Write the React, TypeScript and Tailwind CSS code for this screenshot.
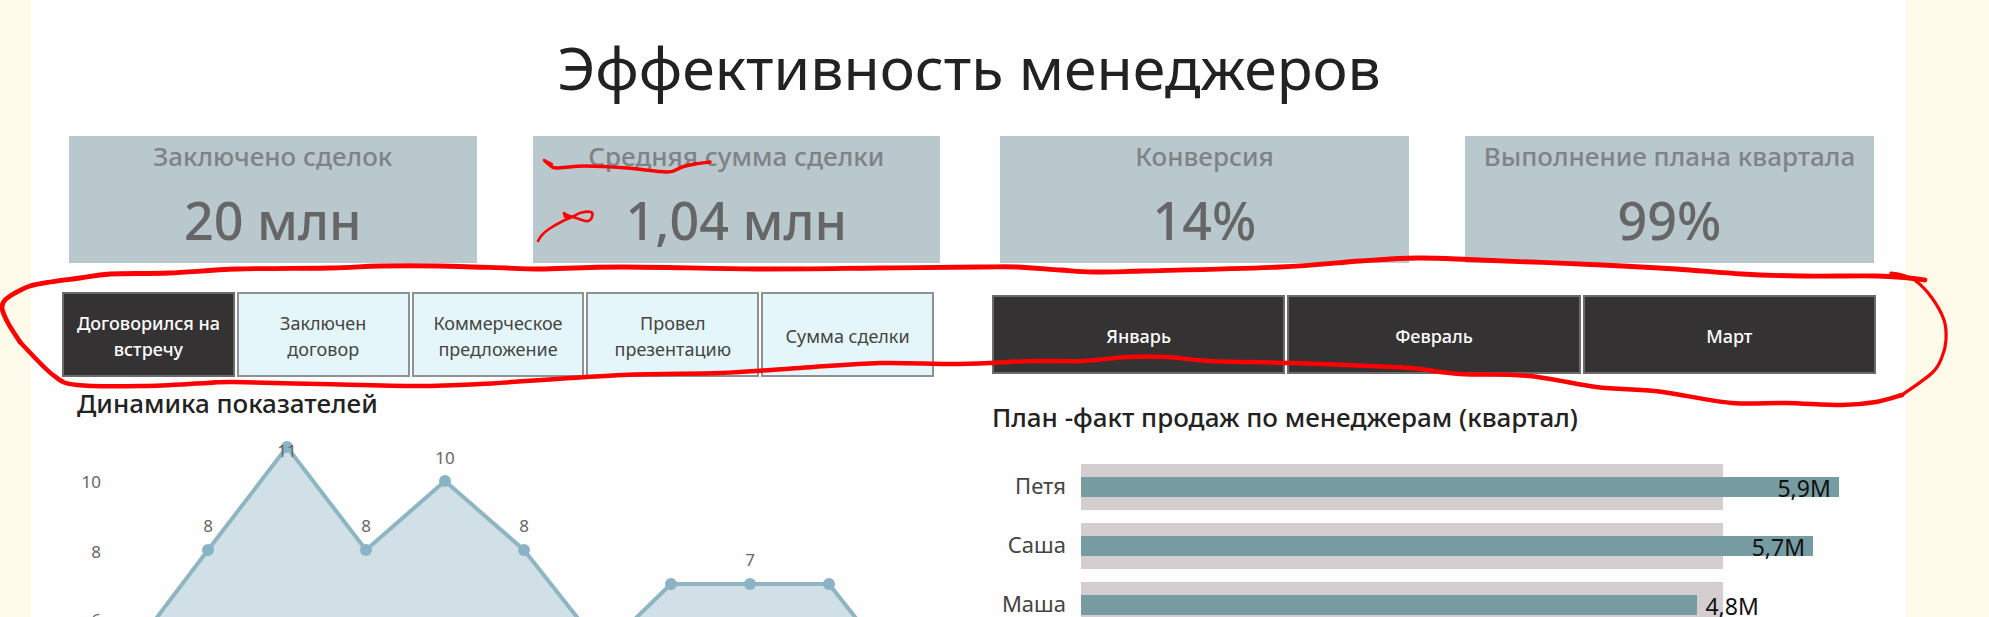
const kpiGroups = [
  [
    { label: "Заключено сделок", value: "20 млн" },
    { label: "Средняя сумма сделки", value: "1,04 млн" },
  ],
  [
    { label: "Конверсия", value: "14%" },
    { label: "Выполнение плана квартала", value: "99%" },
  ],
];

const stages = ["Договорился на встречу", "Заключен договор", "Коммерческое предложение", "Провел презентацию", "Сумма сделки"];
const months = ["Январь", "Февраль", "Март"];

const PLAN = 5;
const AXIS_MAX = 6.19;
const managers = [
  { name: "Петя", value: 5.9, inside: true },
  { name: "Саша", value: 5.7, inside: true },
  { name: "Маша", value: 4.8, inside: false },
];

type Point = [number, number];

/* Smooth curve through a list of points (Catmull-Rom turned into Béziers). */
function smooth(points: Point[]): string {
  const at = (i: number) => points[Math.max(0, Math.min(points.length - 1, i))];
  let d = `M${points[0][0]} ${points[0][1]}`;
  for (let i = 0; i < points.length - 1; i++) {
    const [a, b, c, e] = [at(i - 1), at(i), at(i + 1), at(i + 2)];
    d += ` C${b[0] + (c[0] - a[0]) / 6} ${b[1] + (c[1] - a[1]) / 6} ${c[0] - (e[0] - b[0]) / 6} ${c[1] - (e[1] - b[1]) / 6} ${c[0]} ${c[1]}`;
  }
  return d;
}

const loopTop: Point[] = [
  [20, 342], [8, 323], [2, 308], [5, 300], [15, 293], [30, 286], [50, 282], [80, 278], [110, 274], [169, 273], [237, 269], [330, 268],
  [381, 266], [440, 266], [507, 268], [540, 269], [623, 267], [757, 269], [880, 268], [980, 267], [1017, 267],
  [1060, 270], [1093, 272], [1143, 271], [1280, 267], [1360, 261], [1417, 258], [1480, 260], [1602, 265],
  [1676, 269], [1742, 274], [1802, 276], [1876, 276], [1909, 278], [1925, 280],
];
const loopEnd: Point[] = [
  [1891, 273], [1902, 275], [1916, 281], [1932, 298], [1944, 320], [1946, 340], [1942, 357], [1932, 373], [1902, 395],
];
const loopBottom: Point[] = [
  [1902, 395], [1876, 402], [1842, 405], [1786, 403], [1732, 403], [1669, 393], [1642, 390], [1596, 387],
  [1529, 376], [1460, 374], [1420, 369], [1393, 367], [1293, 363], [1210, 361], [1167, 357], [1127, 357],
  [1083, 361], [1033, 361], [960, 364], [880, 363], [800, 368], [720, 373], [623, 375], [480, 384],
  [417, 386], [320, 384], [233, 382], [207, 383], [143, 386], [77, 385], [53, 375], [20, 342],
];
const underline: Point[] = [
  [545, 161], [551, 166], [557, 168], [585, 166], [627, 168], [667, 172], [682, 167], [695, 164], [710, 162],
];
const scribble: Point[] = [
  [538, 241], [542, 235], [549, 229], [561, 222], [572, 217], [580, 213], [591, 212], [592, 217], [588, 221], [582, 220], [573, 217], [564, 214],
];

function Annotations() {
  return (
    <svg viewBox="0 0 1989 617" className="pointer-events-none absolute inset-x-0 top-0 w-full" fill="none" stroke="#ff0000" strokeLinecap="round" strokeLinejoin="round" aria-hidden="true">
      <path d={smooth(loopTop)} strokeWidth="4.8" />
      <path d={smooth(loopEnd)} strokeWidth="3.2" />
      <path d={smooth(loopBottom)} strokeWidth="4.5" />
      <path d={smooth(underline)} strokeWidth="3.4" />
      <path d="M544 160L552 164" strokeWidth="2.4" />
      <path d={smooth(scribble)} strokeWidth="2.6" />
      <path d="M564 213L570 217L565 217Z" strokeWidth="2.4" fill="#ff0000" />
    </svg>
  );
}

function Tile({ text, selected }: { text: string; selected: boolean }) {
  return (
    <button
      type="button"
      aria-pressed={selected}
      className={
        selected
          ? "h-full min-w-0 flex-1 border-2 border-[#6c6b6c] bg-[#343233] px-1 pt-[2px] text-lg leading-[26px] font-medium text-white"
          : "h-full min-w-0 flex-1 border-2 border-[#8f9192] bg-[#e4f6f9] px-1 pt-[2px] text-lg leading-[26px] text-[#444]"
      }
    >
      {text}
    </button>
  );
}

const trend: Point[] = [
  [68, 225], [146, 122], [225, 19], [304, 122], [383, 53], [462, 122], [541, 222], [609, 156], [688, 156], [767, 156], [846, 256],
];
const trendLabels = [
  { x: 146, y: 104, text: "8" },
  { x: 225, y: 29, text: "11" },
  { x: 304, y: 104, text: "8" },
  { x: 383, y: 36, text: "10" },
  { x: 462, y: 104, text: "8" },
  { x: 688, y: 138, text: "7" },
];
const axisLabels = [
  { y: 60, text: "10" },
  { y: 130, text: "8" },
  { y: 198, text: "6" },
];

function TrendChart() {
  const line = trend.map((p) => p.join(",")).join(" ");
  return (
    <svg viewBox="0 0 872 260" className="block w-full" role="img" aria-label="Динамика показателей">
      <polygon points={`${line} 846,260 68,260`} fill="#d1e0e7" />
      <polyline points={line} fill="none" stroke="#8fb5c3" strokeWidth="4" strokeLinejoin="round" />
      {trend.map(([x, y]) => (
        <circle key={x} cx={x} cy={y} r="6" fill="#8ab3c5" />
      ))}
      <g fill="#666" fontSize="17">
        {trendLabels.map((l) => (
          <text key={l.x} x={l.x} y={l.y} textAnchor="middle">{l.text}</text>
        ))}
        {axisLabels.map((l) => (
          <text key={l.text} x="39" y={l.y} textAnchor="end">{l.text}</text>
        ))}
      </g>
    </svg>
  );
}

function PlanFactChart() {
  return (
    <div className="flex flex-col gap-[13px]">
      {managers.map((m) => (
        <div key={m.name} className="flex h-[46px] items-center">
          <div className="w-[74px] shrink-0 pb-1 text-right text-[22px] leading-6 text-[#444]">{m.name}</div>
          <div className="ml-[15px] grid h-full flex-1 items-center">
            <div className="col-start-1 row-start-1 h-full bg-[#d5ced1]" style={{ width: `${(PLAN / AXIS_MAX) * 100}%` }} />
            <div className="col-start-1 row-start-1 flex items-center">
              <div className="flex h-5 shrink-0 items-center justify-end bg-[#769ba1] pr-2" style={{ width: `${(m.value / AXIS_MAX) * 100}%` }}>
                {m.inside && <Amount value={m.value} />}
              </div>
              {!m.inside && <div className="pl-2"><Amount value={m.value} /></div>}
            </div>
          </div>
        </div>
      ))}
    </div>
  );
}

function Amount({ value }: { value: number }) {
  return <span className="block pt-[2px] text-[23px] leading-5 text-[#111]">{value.toLocaleString("ru-RU")}M</span>;
}

export default function App() {
  return (
    <div className="relative h-screen overflow-hidden bg-[#fffbea] pr-[84px] pl-[31px] font-['Noto_Sans','Open_Sans',sans-serif]">
      <main className="min-h-full bg-[#fefefe] pr-[29px] pl-[31px]">
        <h1 className="pt-[27px] text-center text-[59px] leading-[80px] text-[#222]">Эффективность менеджеров</h1>

        <div className="mt-[29px] mr-[2px] ml-[7px] grid grid-cols-[871fr_874fr] gap-[60px]">
          {kpiGroups.map((group, i) => (
            <div key={i} className="flex gap-14">
              {group.map((kpi) => (
                <section key={kpi.label} className="h-[127px] min-w-0 flex-1 bg-[#b9c8cd] pt-1 text-center">
                  <h2 className="text-[26px] leading-8 font-medium whitespace-nowrap text-[#808285]">{kpi.label}</h2>
                  <p className="pt-4 text-[52px] leading-[64px] font-medium text-[#666]">{kpi.value}</p>
                </section>
              ))}
            </div>
          ))}
        </div>

        <div className="mt-[29px] grid grid-cols-[872fr_884fr] items-center gap-[58px]">
          <div className="flex h-[85px] gap-[2px]">
            {stages.map((s, i) => <Tile key={s} text={s} selected={i === 0} />)}
          </div>
          <div className="flex h-[79px] gap-[2px]">
            {months.map((m) => <Tile key={m} text={m} selected />)}
          </div>
        </div>

        <div className="grid grid-cols-[872fr_884fr] gap-[58px]">
          <section className="pt-[6px]">
            <h2 className="pb-[5px] pl-[15px] text-[26px] leading-10 font-medium text-[#222]">Динамика показателей</h2>
            <TrendChart />
          </section>
          <section className="pt-5">
            <h2 className="pb-[27px] text-[26px] leading-10 font-medium text-[#222]">План -факт продаж по менеджерам (квартал)</h2>
            <PlanFactChart />
          </section>
        </div>
      </main>
      <Annotations />
    </div>
  );
}
